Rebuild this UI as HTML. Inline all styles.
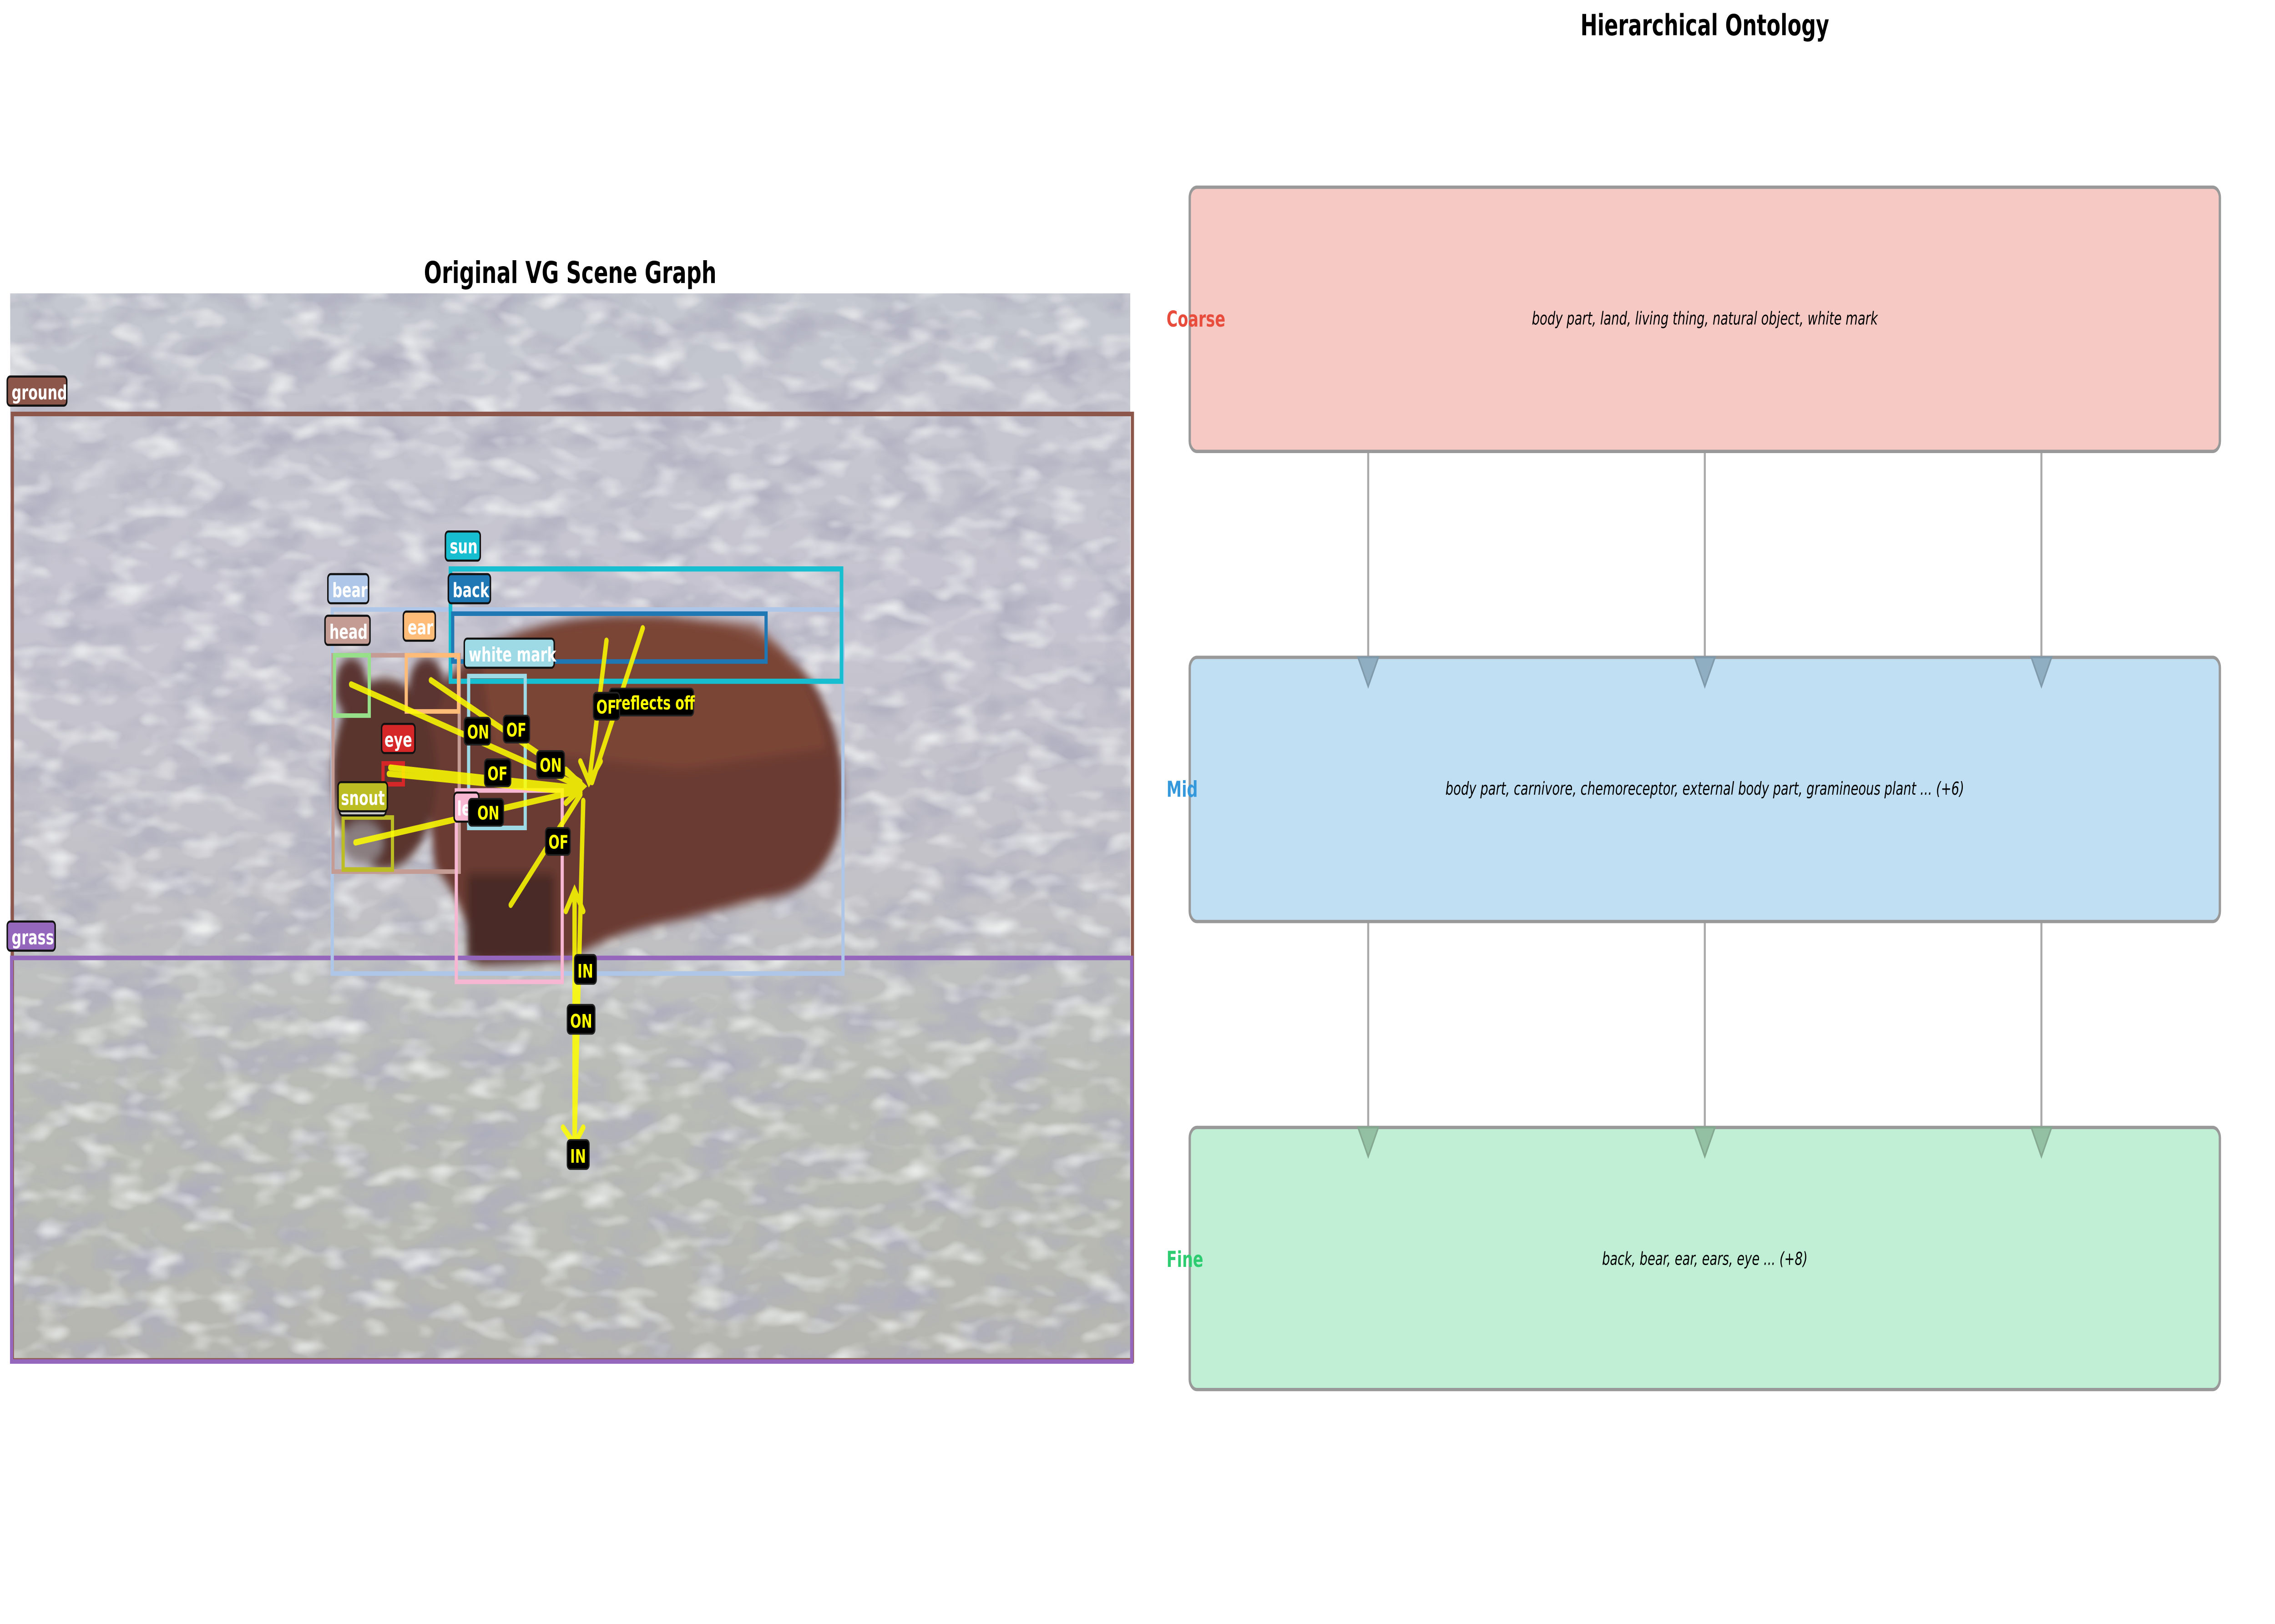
<!DOCTYPE html>
<html><head><meta charset="utf-8"><style>html,body{margin:0;padding:0;background:#fff;overflow:hidden;width:100vw;height:100vh}svg{display:block;width:100vw;height:100vh}</style></head>
<body>
<svg xmlns="http://www.w3.org/2000/svg" viewBox="0 0 1568 780.7" preserveAspectRatio="none" font-family="'DejaVu Sans','Liberation Sans',sans-serif">
<defs>
<linearGradient id="bg" x1="0" y1="0" x2="0" y2="1">
<stop offset="0" stop-color="#c4c7cf"/><stop offset="0.3" stop-color="#c6c4d0"/><stop offset="0.55" stop-color="#c3c2c8"/><stop offset="0.75" stop-color="#b8bcb4"/><stop offset="1" stop-color="#b6b6b0"/>
</linearGradient>
<filter id="tex" x="0" y="0" width="1" height="1">
<feTurbulence type="fractalNoise" baseFrequency="0.025 0.06" numOctaves="3" seed="7"/>
<feColorMatrix type="matrix" values="0 0 0 0 0.42  0 0 0 0 0.42  0 0 0 0 0.52  0 0 0 -2.6 1.45"/>
</filter>
<filter id="tex2" x="0" y="0" width="1" height="1">
<feTurbulence type="fractalNoise" baseFrequency="0.04 0.1" numOctaves="2" seed="3"/>
<feColorMatrix type="matrix" values="0 0 0 0 0.93  0 0 0 0 0.95  0 0 0 0 0.94  0 0 0 2.4 -1.2"/>
</filter>
<filter id="bl"><feGaussianBlur stdDeviation="2.5"/></filter>
<clipPath id="img"><rect x="7" y="141" width="772" height="514"/></clipPath>
</defs>
<rect width="1568" height="780.7" fill="#fff"/>
<text x="393" y="136" font-size="14.5" font-weight="bold" text-anchor="middle">Original VG Scene Graph</text>
<g clip-path="url(#img)">
<rect x="7" y="141" width="772" height="514" fill="url(#bg)"/>
<rect x="7" y="141" width="772" height="514" filter="url(#tex)" opacity="0.85"/>
<rect x="7" y="141" width="772" height="514" filter="url(#tex2)" opacity="0.8"/>
<g filter="url(#bl)">
<path d="M290 345 Q320 300 420 296 Q520 292 560 328 Q588 360 578 400 Q565 430 525 432 L470 442 Q420 448 392 462 L330 464 Q318 430 300 418 Z" fill="#6a3a30"/>
<path d="M330 310 Q420 292 520 300 Q560 320 570 360 L470 370 L340 360 Z" fill="#7e4838" opacity="0.8"/>
<ellipse cx="265" cy="372" rx="36" ry="46" fill="#5a342e"/>
<ellipse cx="242" cy="330" rx="11" ry="14" fill="#5a3430"/>
<ellipse cx="294" cy="330" rx="12" ry="14" fill="#5a3430"/>
<rect x="322" y="420" width="60" height="42" fill="#4a2c28"/>
<ellipse cx="250" cy="405" rx="14" ry="10" fill="#8a7e80"/>
</g>
</g>
<g fill="none" stroke-width="2.2">
<rect x="8.5" y="199" width="772" height="455" stroke="#8c564b"/>
<rect x="8" y="460.5" width="772" height="194" stroke="#9467bd"/>
<rect x="229" y="293" width="352" height="175" stroke="#aec7e8"/>
<rect x="310.5" y="273.5" width="269.5" height="54" stroke="#17becf" stroke-width="2.5"/>
<rect x="312" y="295" width="216" height="23" stroke="#1f77b4"/>
<rect x="229.5" y="315" width="87" height="104" stroke="#c49c94"/>
<rect x="280" y="315" width="36" height="27" stroke="#ffbb78"/>
<rect x="230.5" y="315" width="24" height="29" stroke="#98df8a"/>
<rect x="323" y="325" width="39" height="73" stroke="#9edae5"/>
<rect x="264" y="367" width="14" height="10" stroke="#d62728"/>
<rect x="236.5" y="393" width="34" height="25" stroke="#bcbd22"/>
<rect x="314.5" y="380" width="73" height="92" stroke="#f7b6d2"/>
</g>
<g stroke="#ffff00" stroke-width="3" stroke-linecap="round" fill="none" opacity="0.85">
<line x1="242" y1="329" x2="400" y2="378"/>
<line x1="297" y1="327" x2="400" y2="376"/>
<line x1="269" y1="369" x2="400" y2="379"/>
<line x1="268" y1="372" x2="400" y2="381"/>
<line x1="245" y1="405" x2="400" y2="380"/>
<line x1="352" y1="435" x2="400" y2="382"/>
<line x1="418" y1="308" x2="406" y2="376"/>
<line x1="443" y1="302" x2="408" y2="376"/>
<line x1="402" y1="385" x2="396" y2="548"/>
<line x1="396" y1="545" x2="396" y2="430"/>
<path d="M390 370 L402 378 L390 386 M400 366 L406 376 L414 366 M388 542 L396 550 L402 542 M390 438 L396 428 L402 438"/>
</g>
<g font-size="9.5" font-weight="bold">
<g stroke="#111" stroke-width="1">
<rect x="5" y="181" width="41" height="14" rx="2" fill="#8c564b"/>
<rect x="5" y="443" width="33" height="14" rx="2" fill="#9467bd"/>
<rect x="226" y="276" width="28" height="14" rx="2" fill="#aec7e8"/>
<rect x="307" y="255.5" width="24" height="14" rx="2" fill="#17becf"/>
<rect x="309" y="276" width="29" height="14" rx="2" fill="#1f77b4"/>
<rect x="224" y="296" width="31" height="14" rx="2" fill="#c49c94"/>
<rect x="278" y="294" width="22" height="14" rx="2" fill="#ffbb78"/>
<rect x="320" y="307" width="62" height="14" rx="2" fill="#9edae5"/>
<rect x="263" y="348" width="23" height="14" rx="2" fill="#d62728"/>
<rect x="234" y="380" width="32" height="12" rx="2" fill="#c7c7c7"/>
<rect x="233" y="376" width="34" height="14" rx="2" fill="#bcbd22"/>
<rect x="313" y="381" width="17" height="14" rx="2" fill="#f7b6d2"/>
</g>
<g fill="#fff">
<text x="8" y="192">ground</text><text x="8" y="454">grass</text>
<text x="229" y="287">bear</text><text x="310" y="266">sun</text><text x="312" y="287">back</text>
<text x="227" y="307">head</text><text x="281" y="305">ear</text><text x="323" y="318">white mark</text>
<text x="265" y="359">eye</text><text x="235" y="387">snout</text><text x="315" y="392">le</text>
</g>
<g fill="#000" stroke="#222" stroke-width="0.8">
<rect x="320" y="345" width="18" height="13" rx="2"/><rect x="347" y="344" width="18" height="13" rx="2"/>
<rect x="334" y="365" width="18" height="13" rx="2"/><rect x="370" y="361" width="19" height="13" rx="2"/>
<rect x="323" y="384" width="24" height="13" rx="2"/><rect x="420" y="331" width="58" height="13" rx="2"/>
<rect x="409" y="333" width="18" height="13" rx="2"/><rect x="376" y="398" width="17" height="13" rx="2"/>
<rect x="396" y="459" width="15" height="14" rx="2"/><rect x="391" y="483" width="19" height="14" rx="2"/>
<rect x="391" y="548" width="15" height="14" rx="2"/>
</g>
<g fill="#ffff00" font-size="9">
<text x="322" y="355">ON</text><text x="349" y="354">OF</text><text x="336" y="375">OF</text>
<text x="372" y="371">ON</text><text x="329" y="394">ON</text><text x="424" y="341">reflects off</text>
<text x="411" y="343">OF</text><text x="378" y="408">OF</text><text x="398" y="470">IN</text>
<text x="393" y="494">ON</text><text x="393" y="559">IN</text>
</g>
</g>
<text x="1175" y="17" font-size="14" font-weight="bold" text-anchor="middle">Hierarchical Ontology</text>
<g stroke="#aaa" stroke-width="1.4">
<line x1="943" y1="217" x2="943" y2="316"/><line x1="1175" y1="217" x2="1175" y2="316"/><line x1="1407" y1="217" x2="1407" y2="316"/>
<line x1="943" y1="443" x2="943" y2="542"/><line x1="1175" y1="443" x2="1175" y2="542"/><line x1="1407" y1="443" x2="1407" y2="542"/>
</g>
<g stroke="#999" stroke-width="1.6">
<rect x="820" y="90" width="710" height="127" rx="5" fill="#f6c9c4"/>
<rect x="820" y="316" width="710" height="127" rx="5" fill="#c0dff3"/>
<rect x="820" y="542" width="710" height="126" rx="5" fill="#c0efd6"/>
</g>
<g stroke="#7f9aab" stroke-width="1" fill="#90aec1">
<path d="M936 316 L950 316 L943 330 Z"/><path d="M1168 316 L1182 316 L1175 330 Z"/><path d="M1400 316 L1414 316 L1407 330 Z"/>
</g>
<g stroke="#84a890" stroke-width="1" fill="#93bfa2">
<path d="M936 542 L950 542 L943 556 Z"/><path d="M1168 542 L1182 542 L1175 556 Z"/><path d="M1400 542 L1414 542 L1407 556 Z"/>
</g>
<g font-size="8.6" font-style="italic" text-anchor="middle">
<text x="1175" y="156">body part, land, living thing, natural object, white mark</text>
<text x="1175" y="382">body part, carnivore, chemoreceptor, external body part, gramineous plant ... (+6)</text>
<text x="1175" y="608">back, bear, ear, ears, eye ... (+8)</text>
</g>
<g font-size="10.5" font-weight="bold">
<text x="804" y="157" fill="#e74c3c">Coarse</text>
<text x="804" y="383" fill="#3498db">Mid</text>
<text x="804" y="609" fill="#2ecc71">Fine</text>
</g>
</svg>
</body></html>
